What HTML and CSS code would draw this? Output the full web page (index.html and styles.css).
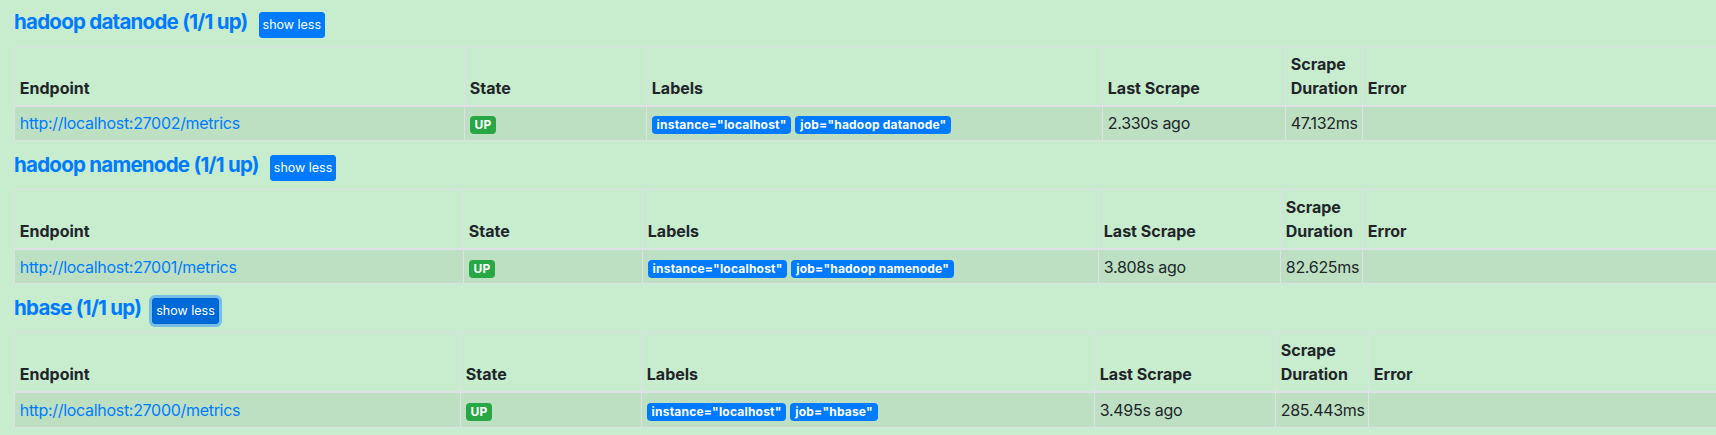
FILE: index.html
```html
<!DOCTYPE html>
<html lang="en">
<head>
<meta charset="utf-8">
<title>Targets</title>
<link rel="stylesheet" href="styles.css">
</head>
<body>
<div class="page">
  <section class="pool">
    <div class="pool-head">
      <h2 class="pool-title"><a href="#">hadoop datanode (1/1 up)</a></h2>
      <button class="btn" type="button">show less</button>
    </div>
    <table class="targets t-a">
      <colgroup><col class="c-ep"><col class="c-st"><col class="c-lb"><col class="c-ls"><col class="c-du"><col class="c-er"></colgroup>
      <thead>
        <tr><th>Endpoint</th><th>State</th><th>Labels</th><th>Last Scrape</th><th>Scrape Duration</th><th>Error</th></tr>
      </thead>
      <tbody>
        <tr>
          <td><a class="endpoint" href="#">http://localhost:27002/metrics</a></td>
          <td><span class="badge badge-up">UP</span></td>
          <td><span class="badge badge-label">instance="localhost"</span> <span class="badge badge-label">job="hadoop datanode"</span></td>
          <td>2.330s ago</td>
          <td>47.132ms</td>
          <td></td>
        </tr>
      </tbody>
    </table>
  </section>

  <section class="pool">
    <div class="pool-head">
      <h2 class="pool-title"><a href="#">hadoop namenode (1/1 up)</a></h2>
      <button class="btn" type="button">show less</button>
    </div>
    <table class="targets t-b">
      <colgroup><col class="c-ep"><col class="c-st"><col class="c-lb"><col class="c-ls"><col class="c-du"><col class="c-er"></colgroup>
      <thead>
        <tr><th>Endpoint</th><th>State</th><th>Labels</th><th>Last Scrape</th><th>Scrape Duration</th><th>Error</th></tr>
      </thead>
      <tbody>
        <tr>
          <td><a class="endpoint" href="#">http://localhost:27001/metrics</a></td>
          <td><span class="badge badge-up">UP</span></td>
          <td><span class="badge badge-label">instance="localhost"</span> <span class="badge badge-label">job="hadoop namenode"</span></td>
          <td>3.808s ago</td>
          <td>82.625ms</td>
          <td></td>
        </tr>
      </tbody>
    </table>
  </section>

  <section class="pool">
    <div class="pool-head">
      <h2 class="pool-title"><a href="#">hbase (1/1 up)</a></h2>
      <button class="btn is-focused" type="button">show less</button>
    </div>
    <table class="targets t-c">
      <colgroup><col class="c-ep"><col class="c-st"><col class="c-lb"><col class="c-ls"><col class="c-du"><col class="c-er"></colgroup>
      <thead>
        <tr><th>Endpoint</th><th>State</th><th>Labels</th><th>Last Scrape</th><th>Scrape Duration</th><th>Error</th></tr>
      </thead>
      <tbody>
        <tr>
          <td><a class="endpoint" href="#">http://localhost:27000/metrics</a></td>
          <td><span class="badge badge-up">UP</span></td>
          <td><span class="badge badge-label">instance="localhost"</span> <span class="badge badge-label">job="hbase"</span></td>
          <td>3.495s ago</td>
          <td>285.443ms</td>
          <td></td>
        </tr>
      </tbody>
    </table>
  </section>
</div>
</body>
</html>
```

FILE: styles.css
```css
html, body {
  margin: 0;
  overflow: hidden;
}

body {
  background: #c8ecce;
  font-family: Inter, "Liberation Sans", sans-serif;
  font-size: 16px;
  line-height: 1.5;
  color: #212529;
}

.page {
  padding: 12px 0 0 14px;
}

.pool-head {
  display: flex;
  align-items: center;
  gap: 11px;
  height: 26px;
  margin-bottom: 8px;
}

.pool-title {
  margin: 0 0 6px;
  font-size: 20.5px;
  line-height: 24px;
  font-weight: 700;
  letter-spacing: -0.75px;
}

.pool-title a {
  color: #007bff;
  text-decoration: none;
}

.btn {
  font-family: Inter, "Liberation Sans", sans-serif;
  font-size: 12.5px;
  line-height: 24px;
  font-weight: 400;
  color: #fff;
  background: #007bff;
  border: 1px solid #007bff;
  border-radius: 3px;
  padding: 0 3px;
  cursor: pointer;
}

.btn.is-focused {
  background: #0069d9;
  border-color: #0062cc;
  box-shadow: 0 0 0 3px rgba(38, 143, 255, 0.5);
}

.targets {
  border-collapse: collapse;
  table-layout: fixed;
  width: 1760px;
  margin-bottom: 14px;
}

.targets th,
.targets td {
  border: 1px solid #dee2e6;
  padding: 4.8px;
  text-align: left;
}

.targets th {
  vertical-align: bottom;
  border-bottom-width: 2px;
  font-weight: 700;
}

.targets td {
  vertical-align: top;
  letter-spacing: -0.3px;
}

.targets tbody tr {
  background: rgba(0, 0, 0, 0.05);
}

.endpoint {
  color: #007bff;
  text-decoration: none;
}

.badge {
  display: inline-block;
  padding: 3px 4.8px;
  font-size: 12px;
  font-weight: 700;
  line-height: 1;
  letter-spacing: 0.2px;
  color: #fff;
  border-radius: 4px;
  white-space: nowrap;
}

.badge-up {
  background: #28a745;
}

.badge-label {
  background: #007bff;
}

.t-a .c-ep { width: 450px; }
.t-a .c-st { width: 182px; }
.t-a .c-lb { width: 456px; }
.t-a .c-ls { width: 183px; }
.t-a .c-du { width: 77px; }

.t-b .c-ep { width: 449px; }
.t-b .c-st { width: 179px; }
.t-b .c-lb { width: 456px; }
.t-b .c-ls { width: 182px; }
.t-b .c-du { width: 82px; }

.t-c .c-ep { width: 446px; }
.t-c .c-st { width: 181px; }
.t-c .c-lb { width: 453px; }
.t-c .c-ls { width: 181px; }
.t-c .c-du { width: 93px; }
```
